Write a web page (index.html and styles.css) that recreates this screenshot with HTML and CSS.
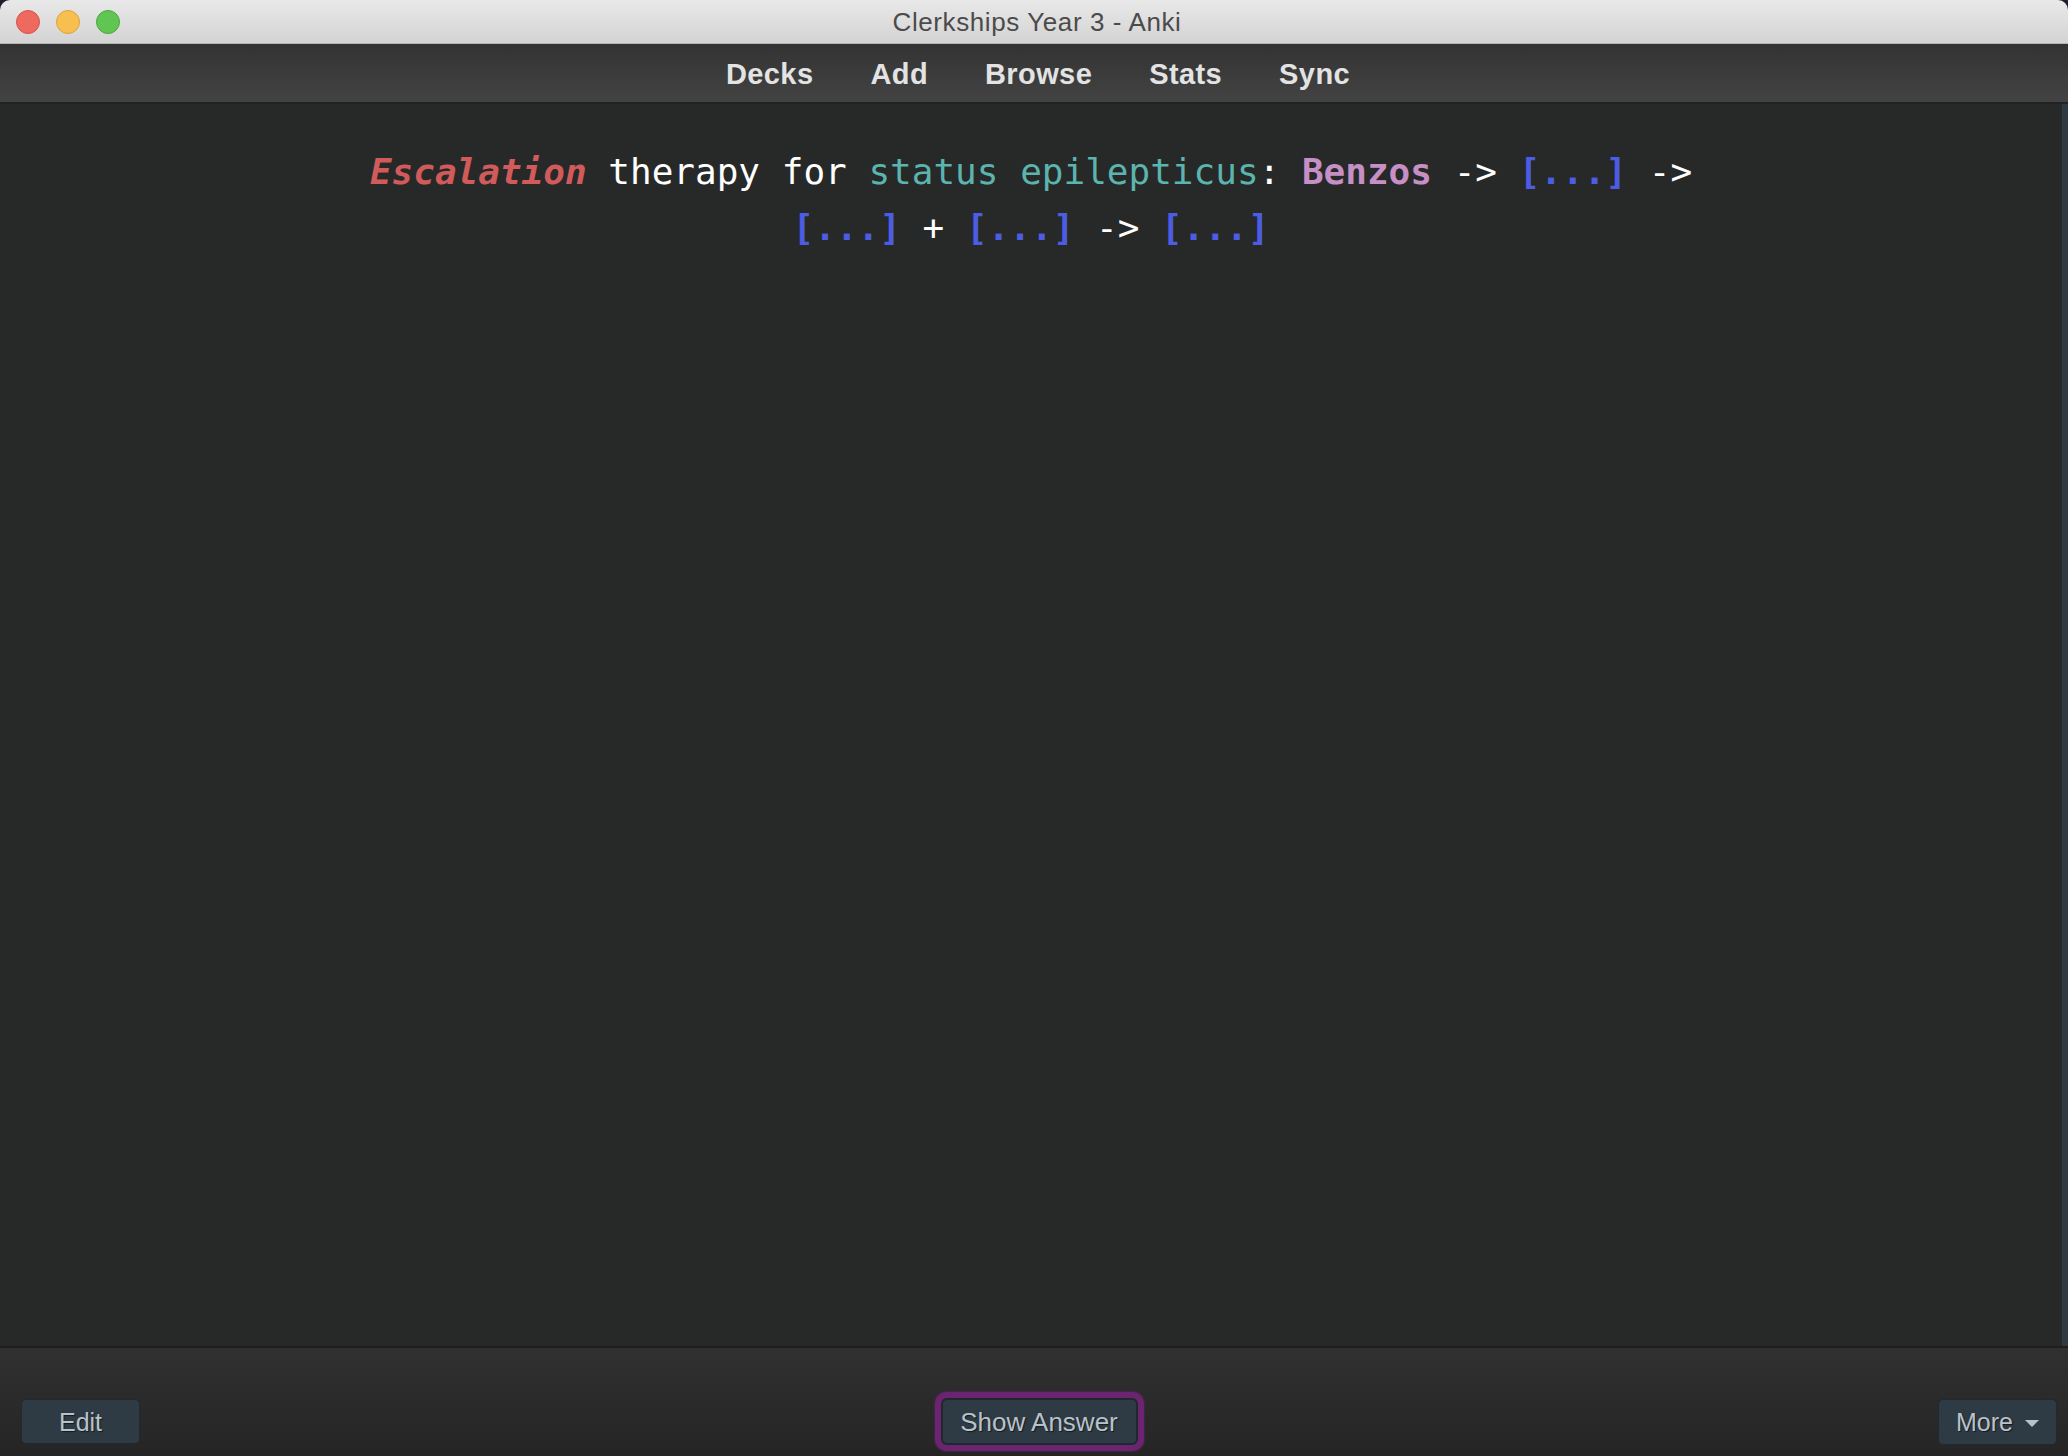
FILE: index.html
```html
<!DOCTYPE html>
<html lang="en">
<head>
<meta charset="utf-8">
<title>Clerkships Year 3 - Anki</title>
<link rel="stylesheet" href="styles.css">
</head>
<body>
<div class="window">
  <header class="titlebar">
    <div class="lights">
      <span class="light red"></span>
      <span class="light yellow"></span>
      <span class="light green"></span>
    </div>
    <div class="title">Clerkships Year 3 - Anki</div>
  </header>
  <nav class="toolbar">
    <a class="toplink">Decks</a>
    <a class="toplink">Add</a>
    <a class="toplink">Browse</a>
    <a class="toplink">Stats</a>
    <a class="toplink">Sync</a>
  </nav>
  <main class="main">
    <section class="card">
      <div class="question"><span class="red-term">Escalation</span> therapy for <span class="teal">status epilepticus</span>: <span class="pink">Benzos</span> -&gt; <span class="cloze">[...]</span> -&gt; <span class="cloze">[...]</span> + <span class="cloze">[...]</span> -&gt; <span class="cloze">[...]</span></div>
    </section>
    <div class="scrollstrip"></div>
  </main>
  <footer class="bottombar">
    <button class="btn btn-edit">Edit</button>
    <button class="btn btn-answer">Show Answer</button>
    <button class="btn btn-more">More <span class="caret"></span></button>
  </footer>
</div>
</body>
</html>
```
FILE: styles.css
```css
html, body {
  margin: 0;
  padding: 0;
  background: #1c2130;
}
.window {
  width: 2068px;
  height: 1456px;
  display: flex;
  flex-direction: column;
  overflow: hidden;
  border-radius: 10px 10px 0 0;
  background: #272928;
}
.titlebar {
  position: relative;
  height: 44px;
  flex: none;
  box-sizing: border-box;
  padding-top: 2px;
  background: linear-gradient(#e9e9e9, #d3d3d3);
  border-bottom: 1px solid #b4b4b4;
  display: flex;
  align-items: center;
  justify-content: center;
}
.lights {
  position: absolute;
  left: 16px;
  top: 10px;
  display: flex;
  gap: 16px;
}
.light {
  width: 24px;
  height: 24px;
  border-radius: 50%;
  box-sizing: border-box;
}
.red { background: #ee6a5e; border: 1px solid #d5544a; }
.yellow { background: #f6bf50; border: 1px solid #dba339; }
.green { background: #61c554; border: 1px solid #4ca63f; }
.title {
  font-family: "Liberation Sans", Arial, sans-serif;
  font-size: 26px;
  letter-spacing: 0.6px;
  color: #4b4b4b;
  padding-left: 6px;
}
.toolbar {
  height: 60px;
  flex: none;
  box-sizing: border-box;
  padding-top: 2px;
  background: linear-gradient(#333333, #434343);
  border-bottom: 2px solid #232323;
  display: flex;
  align-items: center;
  justify-content: center;
  gap: 57px;
  padding-left: 8px;
}
.toplink {
  font-family: "Liberation Sans", Arial, sans-serif;
  font-weight: bold;
  font-size: 29px;
  letter-spacing: 0.4px;
  color: #e3e3e3;
  cursor: pointer;
}
.main {
  flex: 1;
  display: flex;
  min-height: 0;
  border-bottom: 2px solid #1f1f1f;
}
.card {
  flex: 1;
  padding-top: 40px;
}
.scrollstrip {
  width: 6px;
  flex: none;
  background: #2d3943;
}
.question {
  max-width: 1400px;
  margin: 0 auto;
  text-align: center;
  font-family: "DejaVu Sans Mono", "Liberation Mono", monospace;
  font-size: 36px;
  line-height: 56px;
  color: #ffffff;
}
.red-term {
  color: #d15b5b;
  font-weight: bold;
  font-style: italic;
}
.teal { color: #5bb4ae; }
.pink { color: #c68fc6; font-weight: bold; }
.cloze { color: #4c5de4; font-weight: bold; }
.bottombar {
  height: 108px;
  flex: none;
  box-sizing: border-box;
  background: linear-gradient(#303030, #252525);
  display: flex;
  justify-content: space-between;
  align-items: flex-start;
  padding: 51px 11px 0 21px;
}
.btn {
  height: 45px;
  box-sizing: border-box;
  background: #2f3b44;
  border: 1px solid #1f2930;
  border-radius: 5px;
  font-family: "Liberation Sans", Arial, sans-serif;
  font-size: 25px;
  color: #b7c2cb;
  text-shadow: 1px 1px 1px #151a1e;
  display: flex;
  align-items: center;
  justify-content: center;
  padding: 1px 0 0;
  margin: 0;
}
.btn-edit { width: 119px; }
.btn-answer {
  width: 195px;
  font-size: 26px;
  box-shadow: 0 0 0 1px #1e262b, 0 0 0 7px #6b2470, 0 0 2px 8px rgba(107, 36, 112, 0.45);
}
.btn-more {
  width: 119px;
  height: 46px;
}
.caret {
  display: inline-block;
  width: 0;
  height: 0;
  margin-left: 12px;
  margin-top: 2px;
  border-left: 7px solid transparent;
  border-right: 7px solid transparent;
  border-top: 7px solid #b7c2cb;
}
```
